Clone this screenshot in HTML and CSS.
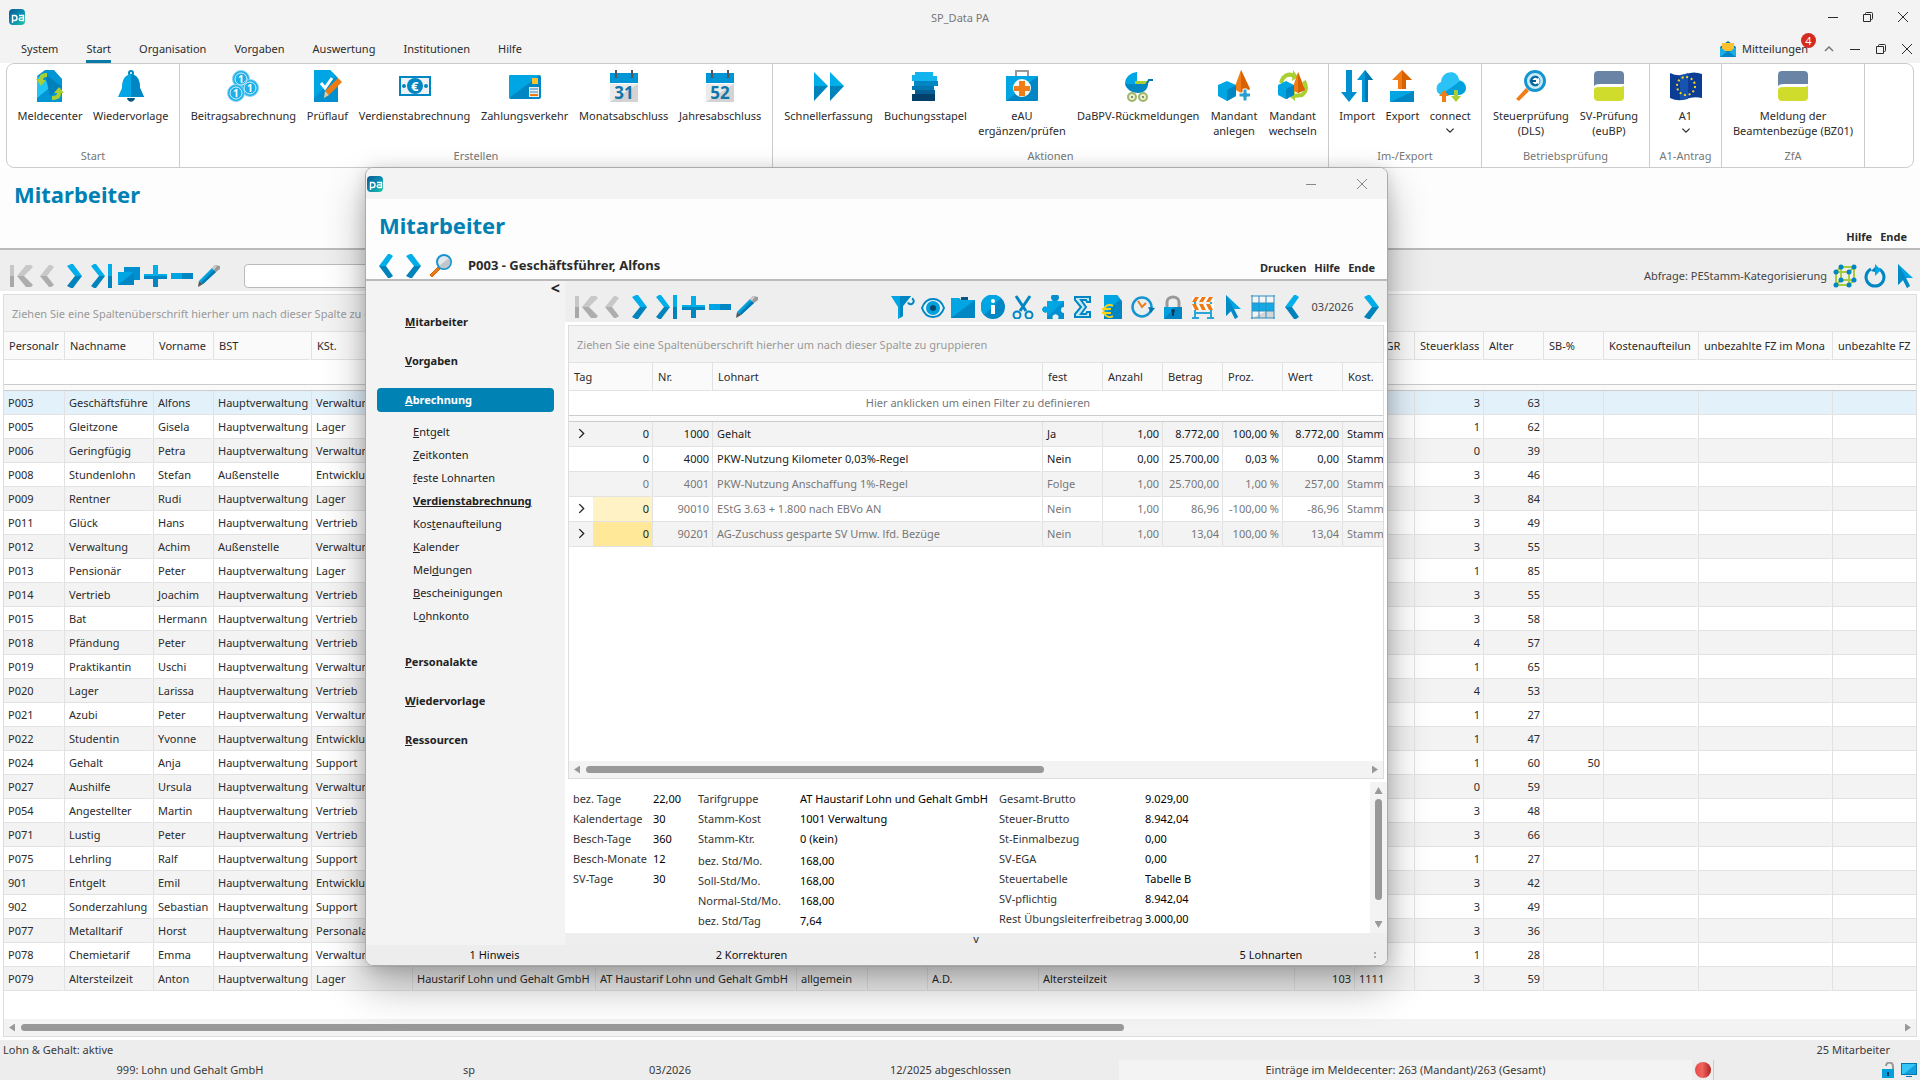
FILE: index.html
```
<!DOCTYPE html>
<html lang="de">
<head>
<meta charset="utf-8">
<title>SP_Data PA</title>
<link rel="stylesheet" href="styles.css">
</head>
<body>
<svg class="defs" aria-hidden="true">
  <defs>
    <linearGradient id="logo-fill" x1="0" y1="0" x2="1" y2="1"><stop offset="0" stop-color="#0a5a94"/><stop offset=".55" stop-color="#0a8fb0"/><stop offset="1" stop-color="#1ec9a0"/></linearGradient>
    <symbol id="logo" viewBox="0 0 16 16"><rect width="16" height="16" rx="4" fill="url(#logo-fill)"/><g fill="none" stroke="#fff" stroke-width="1.4"><path d="M3.500 14V6.500h2.200a2.300 2.500 0 0 1 0 5H3.500M10 6.500h4.500V11.500h-3a1.300 1.300 0 0 1 0-2.600h3"/></g></symbol>
    <symbol id="first" viewBox="0 0 24 24"><path d="M1 1h4v12H1z" fill="#c6c6c6"/><path d="M1 12h4v11H1z" fill="#a8a8a8"/><path d="M17 1h5l2 2-9 9H8z" fill="#c8c8c8"/><path d="M8 12h7l9 9-2 2h-5z" fill="#adadad"/></symbol>
    <symbol id="prev-off" viewBox="0 0 24 24"><path d="M13 1h2l3 2-7 9H4z" fill="#c8c8c8"/><path d="M4 12h7l7 9-3 2h-2z" fill="#adadad"/></symbol>
    <symbol id="prev" viewBox="0 0 24 24"><path d="M13 0h2l3 2-7 10H4z" fill="#00aeea"/><path d="M4 12h7l7 10-3 2h-2z" fill="#0082ba"/></symbol>
    <symbol id="next" viewBox="0 0 24 24"><path d="M8 0h2l9 12h-7L4 2z" fill="#00aeea"/><path d="M19 12h-7L4 22l4 2h2z" fill="#0082ba"/></symbol>
    <symbol id="last" viewBox="0 0 24 24"><path d="M4 0h2l9 12H9L1 2z" fill="#00aeea"/><path d="M15 12H9L1 22l3 2h2z" fill="#0082ba"/><path d="M18 0h4v12h-4z" fill="#00aeea"/><path d="M18 12h4v12h-4z" fill="#0082ba"/></symbol>
    <symbol id="copy" viewBox="0 0 24 24"><path d="M7 3h16v13H7z" fill="#0090cf"/><path d="M1 8h16v13H1z" fill="#0087c3"/><path d="M1 8h16L1 21z" fill="#00a5e4"/></symbol>
    <symbol id="plus" viewBox="0 0 24 24"><path d="M9 1h5v9h9v2H0v-2h9z" fill="#00aeea"/><path d="M0 12h23v3h-9v8H9v-8H0z" fill="#0087c3"/></symbol>
    <symbol id="minus" viewBox="0 0 24 24"><path d="M0 9h22v6H0z" fill="#00a5e4"/><path d="M11 9h11v6H11z" fill="#0087c3"/></symbol>
    <symbol id="pencil" viewBox="0 0 24 24"><path d="m0 23 1-6 4 3z" fill="#555"/><path d="M1 17 14 4l4 4L5 20z" fill="#00a0dd"/><path d="m3 19 13-13 2 2L5 20z" fill="#0077b0"/><path d="m14 4 3-3 5 1v3l-4 3z" fill="#9a9a9a"/><path d="m14 4 3-3 2 1-3 4z" fill="#ccc"/></symbol>
    <symbol id="loupe" viewBox="0 0 24 24"><path d="m1 21 8-8 2 2-8 8z" fill="#ef7a14" stroke="#d86200"/><circle cx="15" cy="8" r="7" fill="#e4e8ea" stroke="#1694cf" stroke-width="2"/><path d="M10 12 20 4a6 6 0 0 1-10 8z" fill="#bfc7cc"/></symbol>
    <symbol id="cube" viewBox="0 0 24 24"><g fill="none" stroke="#a8cc3c" stroke-width="2"><path d="M3 8h13v13H3zM8 3h13v13H8zM3 8l5-5M16 8l5-5M3 21l5-5M16 21l5-5"/></g><g fill="#0087c3"><circle cx="3" cy="8" r="2.500"/><circle cx="16" cy="8" r="2.500"/><circle cx="3" cy="21" r="2.500"/><circle cx="16" cy="21" r="2.500"/><circle cx="8" cy="3" r="2.500"/><circle cx="21" cy="3" r="2.500"/><circle cx="21" cy="16" r="2.500"/><circle cx="8" cy="16" r="2.500"/></g></symbol>
    <symbol id="refresh" viewBox="0 0 24 24"><path d="M16 5a9 9 0 1 1-8 0" fill="none" stroke="#0087c3" stroke-width="3"/><path d="M12 0l6 6-6 6z" fill="#00a5e4"/><path d="M12 3v5l-4-1z" fill="#0087c3"/></symbol>
    <symbol id="cursor" viewBox="0 0 24 24"><path d="M5 0v21l5-5 4 8 3-2-4-8h7z" fill="#00a5e4"/><path d="m5 0 8 14 4 8-3 2-4-8-5 5z" fill="#0077b0" opacity=".55"/></symbol>
    <symbol id="filter" viewBox="0 0 24 24"><path d="M0 1h20l-8 10v10l-5 3V12z" fill="#00a5e4"/><path d="M9 12V1h11l-8 10v10l-3 2z" fill="#0087c3"/><path d="M17 7.500a3 3 0 1 0 4-4" fill="none" stroke="#0087c3" stroke-width="2"/></symbol>
    <symbol id="eye" viewBox="0 0 24 24"><path d="M1 13C5 1 19 1 23 13 19 25 5 25 1 13z" fill="#e8f4fa" stroke="#0087c3" stroke-width="2"/><circle cx="12" cy="13" r="7" fill="#00a0dd"/><circle cx="12" cy="13" r="3" fill="#06476e"/></symbol>
    <symbol id="folder" viewBox="0 0 24 24"><path d="M0 3h8l2 2h14v18H0z" fill="#0087c3"/><path d="M0 3h7l2 2h15L0 23z" fill="#00a5e4"/><path d="M10 2h7v3h-7z" fill="#055680"/></symbol>
    <symbol id="info" viewBox="0 0 24 24"><circle cx="12" cy="12" r="12" fill="#0087c3"/><path d="M3 20A12 12 0 0 1 20 3z" fill="#00a5e4"/><path d="M10 10h4v9h-4z" fill="#fff"/><circle cx="12" cy="6" r="2" fill="#fff"/></symbol>
    <symbol id="scissors" viewBox="0 0 24 24"><g fill="none" stroke="#0087c3" stroke-width="3"><path d="m5 1 10 15M19 1 9 16"/><circle cx="6" cy="20" r="3.500" stroke-width="2"/><circle cx="18" cy="20" r="3.500" stroke-width="2"/></g></symbol>
    <symbol id="puzzle" viewBox="0 0 24 24"><path d="M6 6h6a4 4 0 1 1 4 0h7v6a3 3 0 1 0 0 6v6h-6a3 3 0 1 0-5 0H6v-7a3 3 0 1 1 0-5z" fill="#0090cf"/><path d="M6 6h17L6 22v-5a3 3 0 1 1 0-5z" fill="#00a5e4"/></symbol>
    <symbol id="sigma" viewBox="0 0 24 24"><path d="M4 2h15v5h-3l-1-2h-5l5 7-5 7h5l1-2h3v5H4v-3l6-7-6-7z" fill="#c9e8f6" stroke="#0087c3" stroke-width="2"/></symbol>
    <symbol id="euro-doc" viewBox="0 0 24 24"><path d="M3 0h13l5 6v18H3z" fill="#0087c3"/><path d="M3 0h13l3 4L3 20z" fill="#00a5e4"/><path d="M12 11a6 6 0 1 0 0 10M1 14h9M1 18h9" fill="none" stroke="#f5d321" stroke-width="2"/></symbol>
    <symbol id="clock" viewBox="0 0 24 24"><circle cx="11" cy="12" r="9.500" fill="#e9eef0" stroke="#1694cf" stroke-width="2.500"/><path d="m7 6 4 6 4-4" fill="none" stroke="#ef7a14" stroke-width="2"/><path d="m17 12 7 1-4 5z" fill="#0077b0"/></symbol>
    <symbol id="lock" viewBox="0 0 24 24"><path d="M6 12V7a6 5 0 0 1 12 0v5" fill="none" stroke="#999" stroke-width="3"/><path d="M3 12h18v12H3z" fill="#00a0dd"/><path d="M14 12h7v12H3z" fill="#0087c3"/><path d="M11 15h2v6h-2z" fill="#053e60"/><circle cx="12" cy="16" r="2" fill="#053e60"/></symbol>
    <symbol id="barrier" viewBox="0 0 24 24"><path d="M4 6v18M20 6v18M1 23h7M16 23h7M4 18h16" fill="none" stroke="#2ba4d8" stroke-width="2"/><path d="M1 2h22v5H1zM1 9h22v6H1z" fill="#fff"/><path d="m4 2-3 5h4l3-5zm7 0-3 5h4l3-5zm7 0-3 5h4l3-5zM1 9l3 6h4L5 9zm7 0 3 6h4l-3-6zm7 0 3 6h4l-3-6z" fill="#ef7a14"/></symbol>
    <symbol id="grid" viewBox="0 0 24 24"><path d="M1 1h22v22H1z" fill="#f4f4f4"/><path d="M16 16h7v7H1z" fill="#d2d6d8"/><path d="M1 8h22v8H1z" fill="#13a9e6"/><path d="M1 0v24M23 0v24M0 1h24M0 23h24M8 1v22M15 1v22M1 8h22M1 16h22" fill="none" stroke="#2f8fc0" stroke-width="1"/></symbol>
    <symbol id="meld" viewBox="0 0 32 32"><path d="M3 6 11 0h9l8 9v23H3z" fill="#0096d6"/><path d="M3 6 19 15 3 28z" fill="#22c3f5"/><path d="m11 4 17 13-12 9z" fill="#007fba"/><path d="M5 9c0-4 3-6 8-6v4c-3 0-4 1-4 3h3l-5 6-5-7zM27 23c0 5-3 7-9 7v-4c4 0 5-1 5-3h-3l5-6 5 6z" fill="#a9cf32"/></symbol>
    <symbol id="bell" viewBox="0 0 32 32"><circle cx="16" cy="3" r="2" fill="none" stroke="#0087c3" stroke-width="2"/><path d="M16 4c7 1 9 7 9 14l4 9H3l4-9C7 11 9 5 16 4z" fill="#00a5e4"/><path d="M16 4c7 1 9 7 9 14l4 9H16z" fill="#0087c3"/><path d="M12 28h8c-1 5-7 5-8 0z" fill="#055680"/></symbol>
    <symbol id="coins" viewBox="0 0 32 32"><g fill="#1cb0ea" stroke="#8ad6f4"><circle cx="14" cy="9" r="8.500"/><circle cx="23" cy="18" r="8.500"/><circle cx="9" cy="23" r="8.500"/></g><g fill="none" stroke="#d8f1fb"><circle cx="14" cy="9" r="6"/><circle cx="23" cy="18" r="6"/><circle cx="9" cy="23" r="6"/></g><g fill="#fff" font-size="10" font-weight="bold"><text x="11" y="13">1</text><text x="20" y="22">1</text><text x="6" y="27">1</text></g></symbol>
    <symbol id="check" viewBox="0 0 32 32"><path d="M3 0h16l8 8v24H3z" fill="#0090cf"/><path d="M3 0h16l6 6L3 28z" fill="#00a5e4"/><path d="m10 13 4 5 7-10" fill="none" stroke="#fff" stroke-width="3"/><path d="m14 21 13-13 4 4-13 13z" fill="#ef7a14"/><path d="m13 28 1-7 4 4z" fill="#f0c890"/></symbol>
    <symbol id="note" viewBox="0 0 32 32"><path d="M0 6h32v20H0z" fill="#0087c3"/><path d="M2 8h28v16H2z" fill="#f0f3f5"/><circle cx="16" cy="16" r="8" fill="#0087c3"/><circle cx="5" cy="16" r="2" fill="#0087c3"/><circle cx="27" cy="16" r="2" fill="#0087c3"/><text x="12" y="21" font-size="13" font-weight="bold" fill="#fff">€</text></symbol>
    <symbol id="card" viewBox="0 0 32 32"><rect y="5" width="32" height="24" rx="2" fill="#0087c3"/><path d="M1 5h30L0 28V6z" fill="#00a5e4"/><path d="M23 8h6v6h-6z" fill="#f9c22e"/><path d="M20 17h10v10H20z" fill="#e7eef2"/><path d="M21 19h8M21 22h8" stroke="#3a88b8" stroke-width="1"/><path d="M21 25h8" stroke="#ef7a14" stroke-width="2"/></symbol>
    <symbol id="cal31" viewBox="0 0 32 32"><path d="M2 14h28v18H2z" fill="#ebebeb"/><path d="M30 14v18H2z" fill="#d3d3d3"/><path d="M2 3h28v10H2z" fill="#0096d6"/><path d="M8 0v8M24 0v8" stroke="#555" stroke-width="2"/><text x="16" y="29" text-anchor="middle" font-size="17" font-weight="bold" fill="#1176a8">31</text></symbol>
    <symbol id="cal52" viewBox="0 0 32 32"><path d="M2 14h28v18H2z" fill="#ebebeb"/><path d="M30 14v18H2z" fill="#d3d3d3"/><path d="M2 3h28v10H2z" fill="#0096d6"/><path d="M8 0v8M24 0v8" stroke="#555" stroke-width="2"/><text x="16" y="29" text-anchor="middle" font-size="17" font-weight="bold" fill="#1176a8">52</text></symbol>
    <symbol id="fast" viewBox="0 0 32 32"><path d="m1 2 14 14H1zm16 0 14 14H17z" fill="#00aeea"/><path d="m1 31 14-15H1zm16 0 14-15H17z" fill="#0082ba"/></symbol>
    <symbol id="stack" viewBox="0 0 32 32"><path d="M6 2h18v4h4v5H3V5h3z" fill="#13b4ee"/><path d="M5 11h24v5H5z" fill="#0087c3"/><path d="M3 16h22v4H3z" fill="#0077b0"/><path d="M6 20h20v4H6z" fill="#055e94"/><path d="M3 24h23v7H3z" fill="#05406c"/></symbol>
    <symbol id="aid" viewBox="0 0 32 32"><path d="M10 7V1h12v6" fill="none" stroke="#999" stroke-width="2"/><rect y="6" width="32" height="25" rx="1" fill="#0087c3"/><path d="M0 6h32L0 31z" fill="#00a5e4"/><circle cx="16" cy="18" r="9" fill="#f4f6f7"/><path d="M13 11h6v5h5v5h-5v5h-6v-5H8v-5h5z" fill="#f07d16"/></symbol>
    <symbol id="pram" viewBox="0 0 32 32"><path d="M15 2v12H3C3 7 8 3 15 2z" fill="#00a5e4"/><path d="M13 11h12l1 3H13z" fill="#a9cf32"/><path d="M3 14h23c0 5-4 9-10 9S4 19 3 14z" fill="#0087c3"/><path d="m24 15 3-5h4" fill="none" stroke="#0077b0" stroke-width="2"/><g fill="#e9efc9" stroke="#9fb66a" stroke-width="2"><circle cx="10" cy="27" r="4"/><circle cx="21" cy="27" r="4"/></g><circle cx="10" cy="27" r="1" fill="#666"/><circle cx="21" cy="27" r="1" fill="#666"/></symbol>
    <symbol id="mandant" viewBox="0 0 32 32"><path d="m23 0 9 19-9 4-7-4z" fill="#f07d16"/><path d="m23 0 9 19-9 4z" fill="#d96200"/><path d="m0 15 9-4 9 4v11l-9 5-9-5z" fill="#00a5e4"/><path d="m9 20 9-5v11l-9 5z" fill="#0087c3"/><path d="M25 19h4v4h4v4h-4v4h-4v-4h-4v-4h4z" fill="#2b9fd2" stroke="#fff" stroke-width="1"/></symbol>
    <symbol id="wechsel" viewBox="0 0 32 32"><g fill="none" stroke="#a9cf32" stroke-width="4"><path d="M4 13C6 5 12 3 17 6M27 11c3 6 2 11-2 14l-9 1M3 21c2 4 4 6 8 6"/></g><path d="m16 0 5 7-6 4zM18 20v11l-6-5z" fill="#a9cf32"/><path d="m21 2 7 18-7 3-6-3z" fill="#f07d16"/><path d="m21 2 7 18-7 3z" fill="#d96200"/><path d="m1 15 8-4 8 4v10l-8 4-8-4z" fill="#00a5e4"/><path d="m9 19 8-4v10l-8 4z" fill="#0087c3"/></symbol>
    <symbol id="import" viewBox="0 0 32 32"><path d="M5 0h6v22h5l-8 10-8-10h5z" fill="#0090cf"/><path d="M21 32h6V10h5L24 0l-8 10h5z" fill="#0098d8"/><path d="M24 0v32h3V10h5z" fill="#0077b0"/></symbol>
    <symbol id="export" viewBox="0 0 32 32"><path d="M4 21h24v11H4z" fill="#0087c3"/><path d="M4 21h24L4 32z" fill="#00a5e4"/><path d="m16 0 10 10h-6v9h-8v-9H6z" fill="#f07d16"/><path d="m16 0 10 10h-6v9h-4z" fill="#d96200"/></symbol>
    <symbol id="cloud" viewBox="0 0 32 32"><path d="M7 25a7 7 0 0 1 0-13C8 0 24-1 25 10c9 2 9 14 0 15z" fill="#2bc3f7"/><path d="M7 25 26 11c8 2 8 13-1 14z" fill="#00a0dd"/><path d="m10 20 5 6h-3v6H8v-6H5z" fill="#f07d16"/><path d="m22 32 5-6h-3v-6h-4v6h-3z" fill="#a9cf32"/></symbol>
    <symbol id="steuer" viewBox="0 0 32 32"><path d="m1 29 10-11 3 3L4 31z" fill="#f07d16"/><circle cx="20" cy="11" r="9.500" fill="#cdeaf7" stroke="#1694cf" stroke-width="3"/><circle cx="20" cy="11" r="5" fill="#fff" stroke="#1694cf"/><path d="M23 8a4 4 0 1 0 0 6M15 11h6" fill="none" stroke="#055e94" stroke-width="2"/></symbol>
    <symbol id="sv" viewBox="0 0 32 32"><path d="M5 1h22q4 0 4 4v9H7q-6 0-6 3V5q0-4 4-4z" fill="#6a84a6"/><path d="M1 20q0-3 5-3h19q6 0 6-2v12q0 4-4 4H5q-4 0-4-4z" fill="#d0dc2c"/></symbol>
    <symbol id="eu" viewBox="0 0 32 32"><path d="M0 3q8 4 16 1t16 0v24q-8-2-16 1T0 28z" fill="#0b3d96"/><path d="M10 5q6-1 8-2v26q-5 1-8 1z" fill="#1653ae"/><circle cx="16" cy="16" r="9" fill="none" stroke="#f5d321" stroke-width="2" stroke-dasharray="2 2.710"/></symbol>
    <symbol id="mail" viewBox="0 0 16 16"><path d="M0 6 8 0l8 6v10H0z" fill="#0077b0"/><path d="M2 2h12v8H2z" fill="#f9c22e"/><path d="m0 6 8 6 8-6v10H0z" fill="#1aaee6"/><path d="m0 16 8-6 8 6z" fill="#0087c3"/></symbol>
    <symbol id="w-min" viewBox="0 0 10 10"><path d="M0 5.500h10" fill="none" stroke="currentColor"/></symbol>
    <symbol id="w-max" viewBox="0 0 10 10"><path d="M.5 2.500h7v7h-7zM2.500 2.500v-1q0-1 1-1h5q1 0 1 1v5q0 1-1 1h-1" fill="none" stroke="currentColor"/></symbol>
    <symbol id="w-close" viewBox="0 0 10 10"><path d="m0 0 10 10M10 0 0 10" fill="none" stroke="currentColor"/></symbol>
    <symbol id="chev-up" viewBox="0 0 10 10"><path d="m1 7 4-4 4 4" fill="none" stroke="currentColor" stroke-width="1.500"/></symbol>
    <symbol id="chev-down" viewBox="0 0 10 10"><path d="m2 3 3 3 3-3" fill="none" stroke="currentColor"/></symbol>
    <symbol id="chev-right" viewBox="0 0 10 10"><path d="m3 1 4 4-4 4" fill="none" stroke="currentColor" stroke-width="1.200"/></symbol>
    <symbol id="unlock" viewBox="0 0 16 16"><path d="M6 4a3 3 0 0 1 7 0v4" fill="none" stroke="#999" stroke-width="2"/><path d="M2 7h12v9H2z" fill="#00a0dd"/><path d="M7 10h2v4H7z" fill="#053e60"/></symbol>
    <symbol id="monitor" viewBox="0 0 16 16"><path d="M0 1h16v12H0z" fill="#0077b0"/><path d="M1 2h14v10H1z" fill="#35c6f7"/><path d="M15 2v10H3z" fill="#13a0dc"/><path d="M5 14h6v1H5z" fill="#0077b0"/></symbol>
  </defs>
</svg>

<div class="titlebar">
  <svg class="i16"><use href="#logo"/></svg>
  <span class="app-name">SP_Data PA</span>
  <div class="wbtns">
    <button aria-label="Minimieren"><svg><use href="#w-min"/></svg></button><button aria-label="Wiederherstellen"><svg><use href="#w-max"/></svg></button><button aria-label="Schließen"><svg><use href="#w-close"/></svg></button>
  </div>
</div>
<nav class="tabs">
  <a href="#">System</a><a href="#" class="active">Start</a><a href="#">Organisation</a><a href="#">Vorgaben</a><a href="#">Auswertung</a><a href="#">Institutionen</a><a href="#">Hilfe</a>
  <button class="messages"><svg class="i16"><use href="#mail"/></svg>Mitteilungen<span class="badge">4</span></button>
  <div class="wbtns tight">
    <button class="grey" aria-label="Menüband einklappen"><svg><use href="#chev-up"/></svg></button><button aria-label="Minimieren"><svg><use href="#w-min"/></svg></button><button aria-label="Wiederherstellen"><svg><use href="#w-max"/></svg></button><button aria-label="Schließen"><svg><use href="#w-close"/></svg></button>
  </div>
</nav>
<div class="ribbon">
  <section class="g1"><div><button><svg><use href="#meld"/></svg>Meldecenter</button><button><svg><use href="#bell"/></svg>Wiedervorlage</button></div><h2>Start</h2></section>
  <section class="g2"><div><button><svg><use href="#coins"/></svg>Beitragsabrechnung</button><button><svg><use href="#check"/></svg>Prüflauf</button><button><svg><use href="#note"/></svg>Verdienstabrechnung</button><button><svg><use href="#card"/></svg>Zahlungsverkehr</button><button><svg><use href="#cal31"/></svg>Monatsabschluss</button><button><svg><use href="#cal52"/></svg>Jahresabschluss</button></div><h2>Erstellen</h2></section>
  <section class="g3"><div><button><svg><use href="#fast"/></svg>Schnellerfassung</button><button><svg><use href="#stack"/></svg>Buchungsstapel</button><button><svg><use href="#aid"/></svg>eAU<br>ergänzen/prüfen</button><button><svg><use href="#pram"/></svg>DaBPV-Rückmeldungen</button><button><svg><use href="#mandant"/></svg>Mandant<br>anlegen</button><button><svg><use href="#wechsel"/></svg>Mandant<br>wechseln</button></div><h2>Aktionen</h2></section>
  <section class="g4"><div><button><svg><use href="#import"/></svg>Import</button><button><svg><use href="#export"/></svg>Export</button><button><svg><use href="#cloud"/></svg>connect<svg class="chev"><use href="#chev-down"/></svg></button></div><h2>Im-/Export</h2></section>
  <section class="g5"><div><button><svg><use href="#steuer"/></svg>Steuerprüfung<br>(DLS)</button><button><svg><use href="#sv"/></svg>SV-Prüfung<br>(euBP)</button></div><h2>Betriebsprüfung</h2></section>
  <section class="g6"><div><button><svg><use href="#eu"/></svg>A1<svg class="chev"><use href="#chev-down"/></svg></button></div><h2>A1-Antrag</h2></section>
  <section class="g7"><div><button><svg><use href="#sv"/></svg>Meldung der<br>Beamtenbezüge (BZ01)</button></div><h2>ZfA</h2></section>
</div>

<main>
  <header class="page-head">
    <h1>Mitarbeiter</h1>
    <div class="head-links"><a href="#">Hilfe</a><a href="#">Ende</a></div>
  </header>
  <div class="toolbar">
    <button aria-label="Erster" disabled><svg><use href="#first"/></svg></button><button aria-label="Zurück" disabled><svg><use href="#prev-off"/></svg></button><button aria-label="Weiter"><svg><use href="#next"/></svg></button><button aria-label="Letzter"><svg><use href="#last"/></svg></button><button aria-label="Kopieren"><svg><use href="#copy"/></svg></button><button aria-label="Neu"><svg><use href="#plus"/></svg></button><button aria-label="Löschen"><svg><use href="#minus"/></svg></button><button aria-label="Bearbeiten"><svg><use href="#pencil"/></svg></button>
    <input class="search" type="text" aria-label="Suche">
    <span class="query">Abfrage: PEStamm-Kategorisierung</span>
    <div class="tools wide"><button aria-label="Auswertungswürfel"><svg><use href="#cube"/></svg></button><button aria-label="Aktualisieren"><svg><use href="#refresh"/></svg></button><button aria-label="Auswahl"><svg><use href="#cursor"/></svg></button></div>
  </div>
  <div class="grid-wrap">
    <div class="grid">
      <p class="group-hint">Ziehen Sie eine Spaltenüberschrift hierher um nach dieser Spalte zu gruppieren</p>
      <table class="staff">
        <colgroup><col class="w61"><col class="w89"><col class="w60"><col class="w98"><col class="w101"><col class="w183"><col class="w201"><col class="w71"><col class="w60"><col class="w111"><col class="w256"><col class="w60"><col class="w60"><col class="w69"><col class="w60"><col class="w60"><col class="w95"><col class="w134"><col></colgroup>
        <thead>
          <tr><th>Personalr<th>Nachname<th>Vorname<th>BST<th>KSt.<th><th><th><th><th><th><th><th>Pers GR<th>Steuerklass<th>Alter<th>SB-%<th>Kostenaufteilun<th>unbezahlte FZ im Mona<th>unbezahlte FZ</tr>
          <tr class="filter"><td colspan="19"></td></tr>
          <tr class="split"><td colspan="19"></td></tr>
        </thead>
        <tbody>
          <tr class="selected"><td>P003<td>Geschäftsführe<td>Alfons<td>Hauptverwaltung<td>Verwaltung<td colspan="7"><td><td>3<td>63<td><td><td><td>
          <tr><td>P005<td>Gleitzone<td>Gisela<td>Hauptverwaltung<td>Lager<td colspan="7"><td><td>1<td>62<td><td><td><td>
          <tr><td>P006<td>Geringfügig<td>Petra<td>Hauptverwaltung<td>Verwaltung<td colspan="7"><td><td>0<td>39<td><td><td><td>
          <tr><td>P008<td>Stundenlohn<td>Stefan<td>Außenstelle<td>Entwicklung<td colspan="7"><td><td>3<td>46<td><td><td><td>
          <tr><td>P009<td>Rentner<td>Rudi<td>Hauptverwaltung<td>Lager<td colspan="7"><td><td>3<td>84<td><td><td><td>
          <tr><td>P011<td>Glück<td>Hans<td>Hauptverwaltung<td>Vertrieb<td colspan="7"><td><td>3<td>49<td><td><td><td>
          <tr><td>P012<td>Verwaltung<td>Achim<td>Außenstelle<td>Verwaltung<td colspan="7"><td><td>3<td>55<td><td><td><td>
          <tr><td>P013<td>Pensionär<td>Peter<td>Hauptverwaltung<td>Lager<td colspan="7"><td><td>1<td>85<td><td><td><td>
          <tr><td>P014<td>Vertrieb<td>Joachim<td>Hauptverwaltung<td>Vertrieb<td colspan="7"><td><td>3<td>55<td><td><td><td>
          <tr><td>P015<td>Bat<td>Hermann<td>Hauptverwaltung<td>Vertrieb<td colspan="7"><td><td>3<td>58<td><td><td><td>
          <tr><td>P018<td>Pfändung<td>Peter<td>Hauptverwaltung<td>Vertrieb<td colspan="7"><td><td>4<td>57<td><td><td><td>
          <tr><td>P019<td>Praktikantin<td>Uschi<td>Hauptverwaltung<td>Verwaltung<td colspan="7"><td><td>1<td>65<td><td><td><td>
          <tr><td>P020<td>Lager<td>Larissa<td>Hauptverwaltung<td>Vertrieb<td colspan="7"><td><td>4<td>53<td><td><td><td>
          <tr><td>P021<td>Azubi<td>Peter<td>Hauptverwaltung<td>Verwaltung<td colspan="7"><td><td>1<td>27<td><td><td><td>
          <tr><td>P022<td>Studentin<td>Yvonne<td>Hauptverwaltung<td>Entwicklung<td colspan="7"><td><td>1<td>47<td><td><td><td>
          <tr><td>P024<td>Gehalt<td>Anja<td>Hauptverwaltung<td>Support<td colspan="7"><td><td>1<td>60<td>50<td><td><td>
          <tr><td>P027<td>Aushilfe<td>Ursula<td>Hauptverwaltung<td>Verwaltung<td colspan="7"><td><td>0<td>59<td><td><td><td>
          <tr><td>P054<td>Angestellter<td>Martin<td>Hauptverwaltung<td>Vertrieb<td colspan="7"><td><td>3<td>48<td><td><td><td>
          <tr><td>P071<td>Lustig<td>Peter<td>Hauptverwaltung<td>Vertrieb<td colspan="7"><td><td>3<td>66<td><td><td><td>
          <tr><td>P075<td>Lehrling<td>Ralf<td>Hauptverwaltung<td>Support<td colspan="7"><td><td>1<td>27<td><td><td><td>
          <tr><td>901<td>Entgelt<td>Emil<td>Hauptverwaltung<td>Entwicklung<td colspan="7"><td><td>3<td>42<td><td><td><td>
          <tr><td>902<td>Sonderzahlung<td>Sebastian<td>Hauptverwaltung<td>Support<td colspan="7"><td><td>3<td>49<td><td><td><td>
          <tr><td>P077<td>Metalltarif<td>Horst<td>Hauptverwaltung<td>Personalabteilung<td colspan="7"><td><td>3<td>36<td><td><td><td>
          <tr><td>P078<td>Chemietarif<td>Emma<td>Hauptverwaltung<td>Verwaltung<td colspan="7"><td><td>1<td>28<td><td><td><td>
          <tr class="full"><td>P079<td>Altersteilzeit<td>Anton<td>Hauptverwaltung<td>Lager<td>Haustarif Lohn und Gehalt GmbH<td>AT Haustarif Lohn und Gehalt GmbH<td>allgemein<td><td>A.D.<td>Altersteilzeit<td class="num">103<td>1111<td class="num">3<td class="num">59<td><td><td><td>
        </tbody>
      </table>
      <div class="hscroll"><i class="left"></i><b class="main-thumb"></b><i class="right"></i></div>
    </div>
  </div>
</main>
<footer class="status">
  <div class="status-top"><span>Lohn &amp; Gehalt: aktive</span><span>25 Mitarbeiter</span></div>
  <div class="status-row"><span>999: Lohn und Gehalt GmbH</span><span>sp</span><span>03/2026</span><span>12/2025 abgeschlossen</span><span class="entries">Einträge im Meldecenter: 263 (Mandant)/263 (Gesamt)</span><span class="ball"><i></i></span><span class="tray"><svg class="i16"><use href="#unlock"/></svg><svg class="i16"><use href="#monitor"/></svg></span></div>
</footer>

<div class="dialog" role="dialog" aria-label="Mitarbeiter">
  <div class="dlg-title"><svg class="i16"><use href="#logo"/></svg><div class="wbtns far"><button aria-label="Minimieren"><svg><use href="#w-min"/></svg></button><button aria-label="Schließen"><svg><use href="#w-close"/></svg></button></div></div>
  <header class="dlg-head">
    <h1>Mitarbeiter</h1>
    <div class="record">
      <button aria-label="Zurück"><svg><use href="#prev"/></svg></button><button aria-label="Weiter"><svg><use href="#next"/></svg></button><button aria-label="Suchen"><svg><use href="#loupe"/></svg></button>
      <strong>P003 - Geschäftsführer, Alfons</strong>
      <div class="head-links"><a href="#">Drucken</a><a href="#">Hilfe</a><a href="#">Ende</a></div>
    </div>
  </header>
  <div class="dlg-body">
    <nav class="side">
      <button class="collapse">&lt;</button>
      <a href="#"><u>M</u>itarbeiter</a>
      <a href="#"><u>V</u>orgaben</a>
      <a href="#" class="on"><u>A</u>brechnung</a>
      <div class="sub"><a href="#"><u>E</u>ntgelt</a><a href="#"><u>Z</u>eitkonten</a><a href="#"><u>f</u>este Lohnarten</a><a href="#" class="here">Verdienstabrechnung</a><a href="#">Kos<u>t</u>enaufteilung</a><a href="#"><u>K</u>alender</a><a href="#">Mel<u>d</u>ungen</a><a href="#"><u>B</u>escheinigungen</a><a href="#">L<u>o</u>hnkonto</a></div>
      <a href="#"><u>P</u>ersonalakte</a>
      <a href="#"><u>W</u>iedervorlage</a>
      <a href="#"><u>R</u>essourcen</a>
    </nav>
    <div class="content">
      <div class="toolbar">
        <button aria-label="Erster" disabled><svg><use href="#first"/></svg></button><button aria-label="Zurück" disabled><svg><use href="#prev-off"/></svg></button><button aria-label="Weiter"><svg><use href="#next"/></svg></button><button aria-label="Letzter"><svg><use href="#last"/></svg></button><button aria-label="Neu"><svg><use href="#plus"/></svg></button><button aria-label="Löschen"><svg><use href="#minus"/></svg></button><button aria-label="Bearbeiten"><svg><use href="#pencil"/></svg></button>
        <div class="tools"><button aria-label="Filter"><svg><use href="#filter"/></svg></button><button aria-label="Ansicht"><svg><use href="#eye"/></svg></button><button aria-label="Ordner"><svg><use href="#folder"/></svg></button><button aria-label="Information"><svg><use href="#info"/></svg></button><button aria-label="Ausschneiden"><svg><use href="#scissors"/></svg></button><button aria-label="Erweiterung"><svg><use href="#puzzle"/></svg></button><button aria-label="Summe"><svg><use href="#sigma"/></svg></button><button aria-label="Euro-Beleg"><svg><use href="#euro-doc"/></svg></button><button aria-label="Verlauf"><svg><use href="#clock"/></svg></button><button aria-label="Sperren"><svg><use href="#lock"/></svg></button><button aria-label="Baustelle"><svg><use href="#barrier"/></svg></button><button aria-label="Auswahl"><svg><use href="#cursor"/></svg></button><button aria-label="Tabelle"><svg><use href="#grid"/></svg></button><button aria-label="Vormonat"><svg><use href="#prev"/></svg></button><span class="month">03/2026</span><button aria-label="Folgemonat"><svg><use href="#next"/></svg></button></div>
      </div>
      <div class="grid-wrap">
        <div class="grid">
          <p class="group-hint">Ziehen Sie eine Spaltenüberschrift hierher um nach dieser Spalte zu gruppieren</p>
          <table class="wages">
            <colgroup><col class="w24"><col class="w60"><col class="w60"><col class="w330"><col class="w60"><col class="w60"><col class="w60"><col class="w60"><col class="w60"><col></colgroup>
            <thead>
              <tr><th colspan="2">Tag<th>Nr.<th>Lohnart<th>fest<th>Anzahl<th>Betrag<th>Proz.<th>Wert<th>Kost.</tr>
              <tr class="filter"><td colspan="10">Hier anklicken um einen Filter zu definieren</td></tr>
              <tr class="split"><td colspan="10"></td></tr>
            </thead>
            <tbody>
              <tr class="alt"><td class="exp"><svg><use href="#chev-right"/></svg><td>0<td>1000<td>Gehalt<td>Ja<td>1,00<td>8.772,00<td>100,00 %<td>8.772,00<td>Stamm
              <tr><td class="exp"><td>0<td>4000<td>PKW-Nutzung Kilometer 0,03%-Regel<td>Nein<td>0,00<td>25.700,00<td>0,03 %<td>0,00<td>Stamm
              <tr class="alt dim"><td class="exp"><td>0<td>4001<td>PKW-Nutzung Anschaffung 1%-Regel<td>Folge<td>1,00<td>25.700,00<td>1,00 %<td>257,00<td>Stamm
              <tr class="dim"><td class="exp"><svg><use href="#chev-right"/></svg><td class="y1">0<td>90010<td>EStG 3.63 + 1.800 nach EBVo AN<td>Nein<td>1,00<td>86,96<td>-100,00 %<td>-86,96<td>Stamm
              <tr class="alt dim"><td class="exp"><svg><use href="#chev-right"/></svg><td class="y2">0<td>90201<td>AG-Zuschuss gesparte SV Umw. lfd. Bezüge<td>Nein<td>1,00<td>13,04<td>100,00 %<td>13,04<td>Stamm
            </tbody>
          </table>
          <div class="hscroll"><i class="left"></i><b class="wage-thumb"></b><i class="right"></i></div>
        </div>
      </div>
      <div class="summary">
        <dl class="s1"><dt>bez. Tage<dd>22,00<dt>Kalendertage<dd>30<dt>Besch-Tage<dd>360<dt>Besch-Monate<dd>12<dt>SV-Tage<dd>30</dl>
        <dl class="s2"><dt>Tarifgruppe<dd>AT Haustarif Lohn und Gehalt GmbH<dt>Stamm-Kost<dd>1001 Verwaltung<dt>Stamm-Ktr.<dd>0 (kein)<dt>bez. Std/Mo.<dd>168,00<dt>Soll-Std/Mo.<dd>168,00<dt>Normal-Std/Mo.<dd>168,00<dt>bez. Std/Tag<dd>7,64</dl>
        <dl class="s3"><dt>Gesamt-Brutto<dd>9.029,00<dt>Steuer-Brutto<dd>8.942,04<dt>St-Einmalbezug<dd>0,00<dt>SV-EGA<dd>0,00<dt>Steuertabelle<dd>Tabelle B<dt>SV-pflichtig<dd>8.942,04<dt>Rest Übungsleiterfreibetrag<dd>3.000,00</dl>
        <div class="vscroll"><i class="up"></i><b></b><i class="down"></i></div>
      </div>
      <button class="fold">v</button>
    </div>
  </div>
  <footer class="dlg-status"><span>1 Hinweis</span><span>2 Korrekturen</span><span></span><span>5 Lohnarten</span><i class="grip"></i></footer>
</div>
</body>
</html>
```
FILE: styles.css
```
* { box-sizing: border-box; }
body {
  margin: 0;
  min-height: 100vh;
  display: flex;
  flex-direction: column;
  position: relative;
  overflow: hidden;
  background: #fff;
  color: #2b2b2b;
  font: 11px/15px "Noto Sans", "Open Sans", sans-serif;
}
h1, h2, p, dl, dd { margin: 0; }
a { color: inherit; text-decoration: none; }
button { border: 0; padding: 0; background: none; color: inherit; font: inherit; }
svg { display: block; }
.defs { position: absolute; width: 0; height: 0; }
.i16 { width: 16px; height: 16px; }

/* window chrome */
.titlebar { display: grid; grid-template-columns: 1fr auto 1fr; align-items: center; height: 34px; background: #f3f3f3; }
.titlebar > .i16 { margin-left: 9px; }
.app-name { color: #777; }
.wbtns { display: flex; justify-self: end; }
.wbtns button { width: 35px; height: 24px; display: grid; place-items: center; }
.wbtns svg { width: 10px; height: 10px; }
.wbtns .grey { color: #777; }
.wbtns.tight button { width: 26px; }
.wbtns.far { color: #888; }
.wbtns.far button { width: 51px; }
.tabs { display: flex; height: 29px; align-items: stretch; padding-left: 7px; background: #f3f3f3; }
.tabs > a { margin: 0 14px; padding-top: 7px; }
.tabs > .active { border-bottom: 3px solid #0a7aa8; }
.messages { position: relative; display: flex; align-items: center; gap: 6px; margin-left: auto; padding-right: 8px; }
.badge { position: absolute; top: -1px; right: 0; width: 15px; height: 15px; border-radius: 50%; background: #d42a20; color: #fff; text-align: center; }
.tabs .wbtns { align-items: center; }

/* ribbon */
.ribbon { display: flex; height: 105px; margin: 0 6px; border: 1px solid #ccc; border-radius: 8px; background: #fff; }
.ribbon section { display: flex; flex-direction: column; justify-content: space-between; padding: 6px 0 4px; border-right: 1px solid #ccc; }
.ribbon section > div { display: flex; justify-content: space-evenly; align-items: flex-start; }
.ribbon button { display: flex; flex-direction: column; align-items: center; text-align: center; white-space: nowrap; }
.ribbon button > svg { width: 32px; height: 32px; margin-bottom: 6px; }
.ribbon button > .chev { width: 12px; height: 12px; margin: 2px 0 0; }
.ribbon h2 { color: #777; font-size: 11px; font-weight: normal; text-align: center; }
.g1 { width: 173px; }
.g2 { width: 593px; }
.g3 { width: 556px; }
.g4 { width: 153px; }
.g5 { width: 168px; }
.g6 { width: 72px; }
.g7 { width: 143px; }

/* page header and toolbar */
main { flex: 1; display: flex; flex-direction: column; }
h1 { color: #0080b3; font-size: 22px; line-height: 30px; }
.page-head { display: flex; justify-content: space-between; height: 82px; padding: 11px 13px 0 14px; border-bottom: 2px solid #bbb; background: #fdfdfd; }
.head-links { display: flex; gap: 8px; align-self: flex-end; margin-bottom: 4px; font-weight: bold; }
.toolbar { display: flex; align-items: center; gap: 3px; height: 41px; padding: 10px 9px 0; background: #eee; }
.toolbar button { width: 24px; height: 24px; flex: none; }
.toolbar svg { width: 24px; height: 24px; }
.search { width: 200px; height: 24px; margin-left: 19px; border: 1px solid #bbb; border-radius: 4px; background: #fff; }
.query { margin-left: auto; padding-right: 3px; color: #444; }
.tools { display: flex; gap: 6px; align-items: center; }
.tools.wide { margin-right: -6px; }

/* data grids */
.grid-wrap { flex: 1; display: flex; padding: 3px; background: #fff; }
.grid { flex: 1; min-width: 0; display: flex; flex-direction: column; border: 1px solid #ddd; }
.group-hint { height: 37px; padding: 11px 8px; overflow: hidden; background: #f3f3f3; border-bottom: 1px solid #e2e2e2; color: #999; }
table { width: 100%; table-layout: fixed; border-collapse: separate; border-spacing: 0; }
th, td { height: 24px; padding: 0 0 1px 4px; overflow: hidden; white-space: nowrap; text-align: left; font-weight: normal; border-right: 4px solid transparent; border-bottom: 1px solid #e2e2e2; background: linear-gradient(#e2e2e2, #e2e2e2) right / 1px 100% no-repeat border-box; }
th { height: 28px; padding-left: 5px; background-color: #fafafa; }
tr > :last-child { border-right-width: 0; background-image: none; }
.filter td { height: 25px; border-bottom-color: #ccc; color: #777; text-align: center; }
.split td { height: 6px; background: #fafafa; border-bottom-color: #ccc; }
tbody tr:nth-child(odd) { background-color: #f3f3f3; }
.staff tbody .selected { background-color: #e3f1fb; }
.staff tr:not(.full) td:nth-child(n+8), .num { text-align: right; }
.wages td { height: 25px; }
.wages .split td { height: 6px; }
.wages td:nth-child(2), .wages td:nth-child(3), .wages tbody td:nth-child(n+6):not(:last-child) { text-align: right; }
.wages tbody tr { color: #1a1a1a; }
.wages tbody .dim { color: #777; }
.wages .exp { border-right-width: 0; padding-left: 7px; background-image: none; color: #222; }
.exp svg { width: 11px; height: 11px; }
.wages .y1, .wages .y2 { color: #222; }
.y1 { background-color: #fff2c4; }
.y2 { background-color: #ffe999; }
.w24 { width: 24px; } .w60 { width: 60px; } .w61 { width: 61px; } .w69 { width: 69px; } .w71 { width: 71px; }
.w89 { width: 89px; } .w95 { width: 95px; } .w98 { width: 98px; } .w101 { width: 101px; } .w111 { width: 111px; }
.w134 { width: 134px; } .w183 { width: 183px; } .w201 { width: 201px; } .w256 { width: 256px; } .w330 { width: 330px; }

/* scroll bars */
.hscroll { display: flex; align-items: center; gap: 6px; height: 17px; margin-top: auto; padding: 0 5px; background: #f3f3f3; }
.hscroll b { height: 7px; border-radius: 4px; background: #999; }
.hscroll .right { margin-left: auto; }
.main-thumb { width: 58%; }
.wage-thumb { width: 57%; }
.left, .right, .up, .down { width: 6px; height: 8px; background: #999; }
.left { clip-path: polygon(0 50%, 100% 0, 100% 100%); }
.right { clip-path: polygon(100% 50%, 0 0, 0 100%); }
.up, .down { width: 8px; height: 7px; }
.up { clip-path: polygon(50% 0, 100% 100%, 0 100%); }
.down { clip-path: polygon(50% 100%, 100% 0, 0 0); }
.vscroll { display: flex; flex-direction: column; align-items: center; width: 17px; margin: -7px 0 0 auto; padding: 5px 0; background: #f3f3f3; }
.vscroll b { width: 7px; height: 101px; margin-top: 5px; border-radius: 4px; background: #999; }
.vscroll .down { margin-top: auto; }

/* status bar */
.status { height: 40px; background: #ededed; color: #3a3a3a; line-height: 20px; }
.status-top { display: flex; justify-content: space-between; padding: 0 30px 0 3px; }
.status-row { display: grid; grid-template-columns: 380px 178px 224px 337px 573px 22px 1fr; text-align: center; }
.entries { background: #f3f3f3; }
.ball { display: grid; place-items: center; border-right: 1px solid #ccc; }
.ball i { width: 16px; height: 16px; border-radius: 50%; background: linear-gradient(90deg, #e84848, #f0655f 45%, #b0201c); }
.tray { display: flex; justify-content: flex-end; gap: 5px; padding: 2px 3px 0 0; }

/* dialog window */
.dialog { position: absolute; left: 365px; top: 167px; width: 1023px; height: 799px; display: flex; flex-direction: column; overflow: hidden; border: 1px solid #aaa; border-radius: 8px; background: #fff; box-shadow: 0 20px 40px rgba(0, 0, 0, .3), 0 2px 16px rgba(0, 0, 0, .14); }
.dlg-title { display: flex; justify-content: space-between; align-items: center; height: 31px; padding-left: 1px; background: #f3f3f3; }
.dlg-head { height: 82px; padding: 11px 12px 0 9px; border-bottom: 2px solid #bbb; background: #fdfdfd; }
.dlg-head h1 { padding-left: 4px; }
.record { display: flex; align-items: flex-end; height: 38px; gap: 3px; }
.record button, .record button svg { width: 24px; height: 24px; }
.record strong { margin: 0 0 5px 12px; font-size: 13px; }
.record .head-links { margin: 0 0 3px auto; }
.dlg-body { flex: 1; display: flex; min-height: 0; }
.side { display: flex; flex-direction: column; width: 199px; padding: 0 11px; background: #f3f3f3; color: #222; }
.side > a { height: 24px; margin-bottom: 15px; padding: 4px 28px; border-radius: 4px; font-weight: bold; }
.side > .on { margin-bottom: 8px; background: #0082b4; color: #fff; }
.collapse { align-self: flex-end; height: 29px; margin-right: -6px; padding-bottom: 14px; font-weight: bold; font-size: 16px; }
.sub { display: flex; flex-direction: column; margin-bottom: 23px; padding-left: 36px; }
.sub a { height: 23px; padding-top: 4px; }
.here { font-weight: bold; text-decoration: underline; }
.content { flex: 1; min-width: 0; display: flex; flex-direction: column; background: #eee; }
.content .tools { margin-left: auto; margin-right: -6px; }
.month { width: 43px; text-align: center; color: #444; }
.summary { display: flex; height: 151px; padding: 7px 0 0 8px; background: #fff; }
.summary dl { display: grid; align-content: start; grid-auto-rows: 20px; line-height: 20px; white-space: nowrap; color: #333; }
.summary dd { color: #000; }
.s1 { grid-template-columns: 80px 45px; }
.summary .s2 { grid-template-columns: 102px 199px; grid-template-rows: 20px 20px 22px; }
.s3 { grid-template-columns: 146px 60px; }
.fold { height: 12px; line-height: 12px; }
.content .grid-wrap { min-height: 0; }
.dlg-status { display: grid; grid-template-columns: 257px 257px 1fr 202px 15px; height: 20px; background: #ededed; color: #111; line-height: 20px; text-align: center; }
.grip { align-self: center; width: 6px; height: 6px; background: conic-gradient(#aaa 25%, transparent 0) 0 0 / 4px 4px; }
```
